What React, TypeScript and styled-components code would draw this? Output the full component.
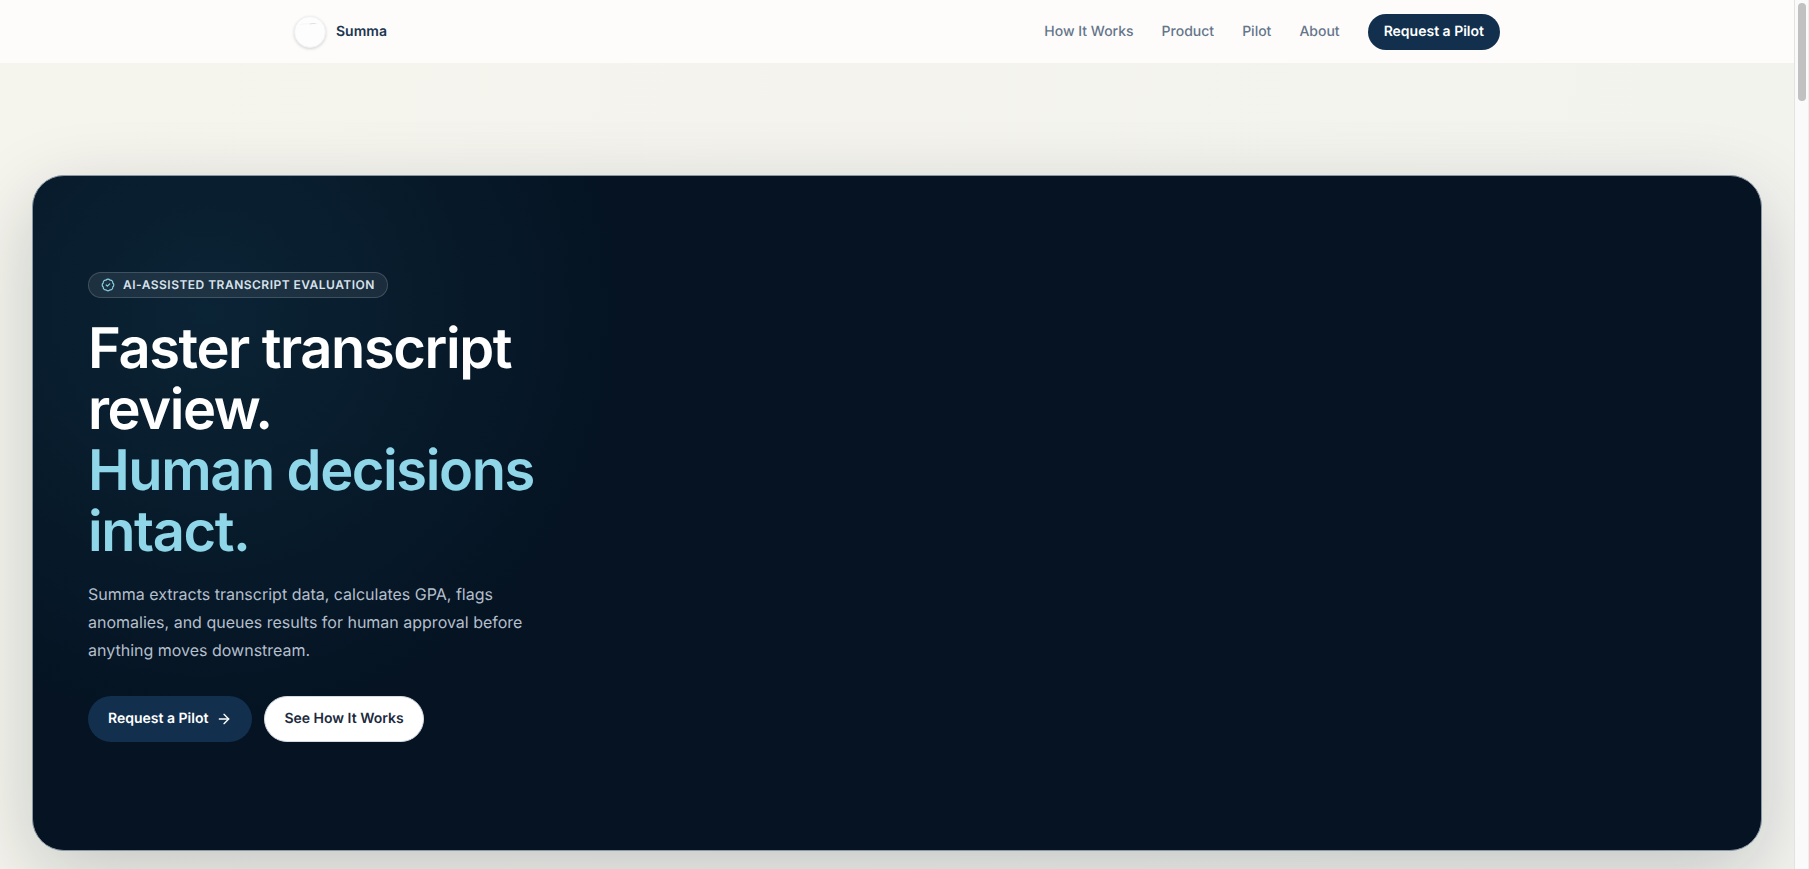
import React from "react";
import styled, { createGlobalStyle, css } from "styled-components";
import { ArrowRight, BadgeCheck } from "lucide-react";

const GlobalStyle = createGlobalStyle`
  *, *::before, *::after { box-sizing: border-box; }
  body {
    margin: 0;
    background: #f4f3ed;
    font-family: Inter, "Liberation Sans", sans-serif;
    text-rendering: geometricPrecision;
    -webkit-font-smoothing: antialiased;
  }
  h1, p { margin: 0; }
`;

const Window = styled.div`
  display: flex;
  height: 100vh;
  overflow: hidden;
`;

const Page = styled.div`
  flex: 1;
  min-width: 0;
  overflow: hidden;
  background: linear-gradient(100deg, #f5f4ed 0%, #f3f3ee 100%);
`;

const ScrollTrack = styled.div`
  flex: none;
  width: 15px;
  padding: 3px;
  background: #fafafb;
  border-left: 1px solid #e3e3e4;
  border-right: 1px solid #ededee;
`;

const ScrollThumb = styled.div`
  width: 8px;
  height: 98px;
  border-radius: 4px;
  background: #c1c1c1;
`;

const Header = styled.header`
  background: #fdfcfa;
`;

const HeaderInner = styled.div`
  display: flex;
  align-items: center;
  justify-content: space-between;
  max-width: 1254px;
  height: 63px;
  margin: 0 auto;
  padding: 0 24px;
`;

const Brand = styled.a`
  display: flex;
  align-items: center;
  gap: 10px;
  color: #1b3550;
  font-size: 14px;
  font-weight: 600;
  line-height: 20px;
  text-decoration: none;
`;

const LogoMark = styled.svg`
  width: 32px;
  height: 32px;
  border: 1px solid #f1f1f3;
  border-radius: 50%;
  background: #fdfdfd;
  box-shadow: 0 1px 3px rgba(20, 35, 60, 0.18);
`;

const Nav = styled.nav`
  display: flex;
  align-items: center;
  gap: 28px;
`;

const NavLink = styled.a`
  color: #65758b;
  font-size: 14px;
  font-weight: 500;
  line-height: 20px;
  text-decoration: none;
`;

type Tone = "navy" | "white";

const tones = {
  navy: css`
    background: #12304e;
    color: #fff;
  `,
  white: css`
    background: #fff;
    border-color: #d5dbe3;
    color: #1c2a3d;
  `,
};

const Button = styled.button<{ $tone: Tone; $large?: boolean }>`
  display: inline-flex;
  align-items: center;
  gap: 8px;
  height: ${(p) => (p.$large ? 46 : 36)}px;
  padding: 0 ${(p) => (p.$large ? 19 : 15)}px;
  border: 1px solid transparent;
  border-radius: 999px;
  font: 600 14px/20px Inter, "Liberation Sans", sans-serif;
  text-rendering: inherit;
  white-space: nowrap;
  cursor: pointer;
  ${(p) => tones[p.$tone]}
`;

const Main = styled.main`
  padding: 112px 32px 96px;
`;

const HeroCard = styled.section`
  padding: 96px 55px 108px;
  border: 1px solid #8a97a5;
  border-radius: 32px;
  background:
    radial-gradient(circle at 10% 20%, rgba(36, 110, 140, 0.18), transparent 26%),
    #051322;
  background-origin: border-box;
  box-shadow: 0 24px 80px rgba(10, 25, 40, 0.2);
`;

const HeroCopy = styled.div`
  display: flex;
  flex-direction: column;
  align-items: flex-start;
  max-width: 460px;
`;

const Badge = styled.p`
  display: inline-flex;
  align-items: center;
  gap: 8px;
  height: 26px;
  padding: 0 12px;
  border: 1px solid rgba(255, 255, 255, 0.16);
  border-radius: 999px;
  background: rgba(255, 255, 255, 0.08);
  color: #d9e2ec;
  font-size: 12px;
  font-weight: 600;
  line-height: 16px;
  letter-spacing: 0.04em;
  text-transform: uppercase;
  white-space: nowrap;

  svg { color: #8ad4e6; }
`;

const Title = styled.h1`
  margin-top: 20px;
  color: #fff;
  font-size: 56px;
  font-weight: 600;
  line-height: 61px;
  letter-spacing: -0.025em;
`;

const TitleAccent = styled.span`
  display: block;
  color: #8ed6e8;
`;

const Lead = styled.p`
  margin-top: 18px;
  color: #b4bfcc;
  font-size: 16px;
  line-height: 28px;
`;

const Actions = styled.div`
  display: flex;
  gap: 12px;
  margin-top: 32px;
`;

const links = [
  { label: "How It Works", href: "#how-it-works" },
  { label: "Product", href: "#product" },
  { label: "Pilot", href: "#pilot" },
  { label: "About", href: "#about" },
];

export default function App() {
  return (
    <Window>
      <GlobalStyle />
      <Page>
        <Header>
          <HeaderInner>
            <Brand href="#top">
              <LogoMark viewBox="0 0 32 32" aria-hidden="true">
                <path d="M5 8C11 7 17 7 24 7" fill="none" stroke="#f4f5f6" />
                <path d="M16 7.5C18 6.8 20 6.8 22 7.2" fill="none" stroke="#dadee3" />
              </LogoMark>
              Summa
            </Brand>
            <Nav>
              {links.map((link) => (
                <NavLink key={link.href} href={link.href}>
                  {link.label}
                </NavLink>
              ))}
              <Button type="button" $tone="navy">Request a Pilot</Button>
            </Nav>
          </HeaderInner>
        </Header>
        <Main>
          <HeroCard>
            <HeroCopy>
              <Badge>
                <BadgeCheck size={14} aria-hidden="true" />
                AI-assisted transcript evaluation
              </Badge>
              <Title>
                Faster transcript review.
                <TitleAccent>Human decisions intact.</TitleAccent>
              </Title>
              <Lead>
                Summa extracts transcript data, calculates GPA, flags anomalies, and queues
                results for human approval before anything moves downstream.
              </Lead>
              <Actions>
                <Button type="button" $tone="navy" $large>
                  Request a Pilot
                  <ArrowRight size={16} aria-hidden="true" />
                </Button>
                <Button type="button" $tone="white" $large>See How It Works</Button>
              </Actions>
            </HeroCopy>
          </HeroCard>
        </Main>
      </Page>
      <ScrollTrack aria-hidden="true">
        <ScrollThumb />
      </ScrollTrack>
    </Window>
  );
}
